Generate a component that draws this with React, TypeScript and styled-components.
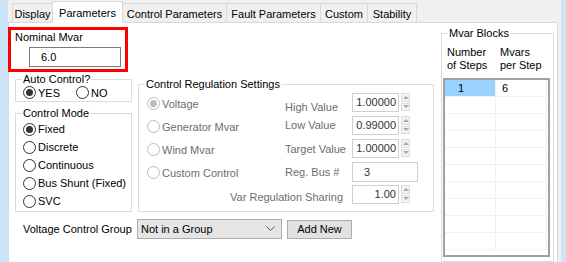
import styled, { createGlobalStyle } from "styled-components";

const GlobalStyle = createGlobalStyle`
  html, body {
    margin: 0;
    padding: 0;
  }
  body {
    font-family: "Liberation Sans", Arial, sans-serif;
    font-size: 11px;
    color: #000;
    background: #f0f0f0;
  }
`;

const Window = styled.div`
  display: flex;
  width: 566px;
  height: 262px;
  overflow: hidden;
  background: #f0f0f0;
`;

const Edge = styled.div<{ $w: number }>`
  flex: none;
  width: ${(p) => p.$w}px;
  background: #cce4f7;
`;

const Form = styled.div`
  flex: none;
  width: 553px;
  display: flex;
  flex-direction: column;
`;

const TabStrip = styled.div`
  display: flex;
  align-items: flex-end;
  height: 22px;
  padding-left: 5px;
  position: relative;
  z-index: 1;
`;

const Tab = styled.div<{ $w: number; $active?: boolean }>`
  box-sizing: border-box;
  width: ${(p) => p.$w}px;
  height: ${(p) => (p.$active ? 22 : 19)}px;
  margin-bottom: ${(p) => (p.$active ? -1 : 0)}px;
  border: 1px solid #d9d9d9;
  border-bottom: none;
  margin-left: -1px;
  background: ${(p) => (p.$active ? "#fff" : "#f0f0f0")};
  display: flex;
  align-items: center;
  justify-content: center;
  padding-top: ${(p) => (p.$active ? 0 : 1)}px;
  white-space: nowrap;
`;

const Panel = styled.div`
  box-sizing: border-box;
  width: 550px;
  flex: 1;
  display: flex;
  background: #fff;
  border: 1px solid #d9d9d9;
  border-bottom: none;
`;

const MainCol = styled.div`
  flex: none;
  width: 432px;
  display: flex;
  flex-direction: column;
`;

const HighlightBox = styled.div`
  box-sizing: border-box;
  width: 120px;
  height: 45px;
  margin: 4px 0 0 -1px;
  border: 3px solid #ff0000;
  padding: 0 0 0 4px;
`;

const FieldLabel = styled.div`
  line-height: 14px;
`;

const TextInput = styled.div<{ $w: number; $pad?: number; $enabled?: boolean }>`
  box-sizing: border-box;
  width: ${(p) => p.$w}px;
  height: 20px;
  border: 1px solid ${(p) => (p.$enabled ? "#7a7a7a" : "#d0d0d0")};
  background: #fff;
  padding-left: ${(p) => p.$pad ?? 4}px;
  line-height: 18px;
  color: ${(p) => (p.$enabled ? "#000" : "#333")};
`;

const NominalInput = styled(TextInput)`
  margin: 3px 0 0 14px;
`;

const Row = styled.div`
  display: flex;
  align-items: flex-start;
`;

const LeftCol = styled.div`
  margin-left: 6px;
  width: 117px;
  display: flex;
  flex-direction: column;
`;

const Group = styled.fieldset<{ $w: number; $top?: number; $left?: number; $bottom?: number }>`
  box-sizing: border-box;
  width: ${(p) => p.$w}px;
  margin: ${(p) => p.$top ?? 0}px 0 0 ${(p) => p.$left ?? 0}px;
  padding: 0 0 ${(p) => p.$bottom ?? 2}px 0;
  border: 1px solid #dcdcdc;
  min-width: 0;
`;

const Legend = styled.legend`
  margin-left: 6px;
  padding: 0 1px;
  line-height: 14px;
  font-size: 11px;
`;

const RadioLine = styled.div`
  display: flex;
  align-items: center;
  gap: 16px;
  height: 13px;
  padding-left: 7px;
`;

const RadioStack = styled.div`
  display: flex;
  flex-direction: column;
  padding-left: 7px;
`;

const Radio = styled.label<{ $h: number; $disabled?: boolean }>`
  display: flex;
  align-items: center;
  gap: 2px;
  height: ${(p) => p.$h}px;
  color: ${(p) => (p.$disabled ? "#6d6d6d" : "#000")};
  white-space: nowrap;
`;

const Circle = styled.span<{ $checked?: boolean; $disabled?: boolean }>`
  flex: none;
  box-sizing: border-box;
  width: 13px;
  height: 13px;
  border-radius: 50%;
  border: 1px solid ${(p) => (p.$disabled ? "#bcbcbc" : "#333")};
  background: #fff;
  display: flex;
  align-items: center;
  justify-content: center;
  &::after {
    content: "";
    display: ${(p) => (p.$checked ? "block" : "none")};
    width: 7px;
    height: 7px;
    border-radius: 50%;
    background: ${(p) => (p.$disabled ? "#bcbcbc" : "#333")};
  }
`;

const RegGrid = styled.div`
  display: grid;
  grid-template-columns: 137px 68px 66px;
  grid-auto-rows: 23px;
  padding: 1px 0 0 8px;
`;

const GridRadio = styled(Radio)<{ $row: number }>`
  grid-column: 1;
  grid-row: ${(p) => p.$row};
`;

const ValueLabel = styled.div<{ $row: number; $shift?: number }>`
  grid-column: 2;
  grid-row: ${(p) => p.$row};
  color: #6d6d6d;
  line-height: 14px;
  padding: ${(p) => p.$shift ?? 5}px 0 0 1px;
  white-space: nowrap;
`;

const SharingLabel = styled.div`
  grid-column: 1 / 3;
  grid-row: 5;
  text-align: right;
  padding: 6px 9px 0 0;
  color: #6d6d6d;
  line-height: 14px;
`;

const SpinCell = styled.div<{ $row: number }>`
  grid-column: 3;
  grid-row: ${(p) => p.$row};
  display: flex;
  align-items: flex-start;
  gap: 2px;
  padding-top: 1px;
`;

const SpinValue = styled.div`
  box-sizing: border-box;
  width: 47px;
  height: 19px;
  border: 1px solid #d0d0d0;
  text-align: right;
  padding-right: 2px;
  line-height: 17px;
  color: #333;
`;

const Spinner = styled.div`
  display: flex;
  flex-direction: column;
  gap: 1px;
  width: 9px;
  height: 18px;
`;

const SpinButton = styled.span<{ $down?: boolean }>`
  flex: 1;
  box-sizing: border-box;
  border: 1px solid #dcdcdc;
  background: #f4f4f4;
  display: flex;
  align-items: center;
  justify-content: center;
  &::after {
    content: "";
    border-left: 3px solid transparent;
    border-right: 3px solid transparent;
    ${(p) => (p.$down ? "border-top" : "border-bottom")}: 3px solid #a8a8a8;
  }
`;

const BusCell = styled.div`
  grid-column: 3;
  grid-row: 4;
  padding-top: 1px;
`;

const BottomRow = styled.div`
  display: flex;
  align-items: center;
  margin-top: 7px;
  height: 20px;
`;

const BottomLabel = styled.div`
  width: 114px;
  margin-left: 14px;
  white-space: nowrap;
`;

const Select = styled.div`
  box-sizing: border-box;
  width: 145px;
  height: 20px;
  border: 1px solid #adadad;
  background: #e5e5e5;
  display: flex;
  align-items: center;
  justify-content: space-between;
  padding: 0 6px 0 3px;
`;

const Button = styled.div`
  box-sizing: border-box;
  width: 65px;
  height: 19px;
  margin-left: 5px;
  border: 1px solid #adadad;
  background: #e1e1e1;
  display: flex;
  align-items: center;
  justify-content: center;
`;

const BlocksHeader = styled.div`
  display: grid;
  grid-template-columns: 53px 53px;
  padding: 6px 0 0 5px;
`;

const HeaderLine = styled.div`
  height: 13px;
  line-height: 13px;
  white-space: nowrap;
`;

const Table = styled.div`
  box-sizing: border-box;
  width: 107px;
  height: 179px;
  margin: 6px 0 0 1px;
  border: 2px solid #a0a0a0;
  display: grid;
  grid-template-columns: 51px 51px;
  grid-auto-rows: 17px;
  align-content: start;
`;

const Cell = styled.div<{ $selected?: boolean; $pad: number }>`
  border-right: 1px solid #f0f0f0;
  border-bottom: 1px solid #f0f0f0;
  background: ${(p) => (p.$selected ? "#99d1ff" : "#fff")};
  padding-left: ${(p) => p.$pad}px;
  line-height: 16px;
`;

const Chevron = () => (
  <svg width="9" height="6" viewBox="0 0 9 6">
    <path d="M0.5 0.5 L4.5 4.5 L8.5 0.5" fill="none" stroke="#555" strokeWidth="1" />
  </svg>
);

const tabs = [
  { label: "Display", w: 41 },
  { label: "Parameters", w: 71, active: true },
  { label: "Control Parameters", w: 105 },
  { label: "Fault Parameters", w: 95 },
  { label: "Custom", w: 48 },
  { label: "Stability", w: 50 },
];

const modes = ["Fixed", "Discrete", "Continuous", "Bus Shunt (Fixed)", "SVC"];
const regModes = ["Voltage", "Generator Mvar", "Wind Mvar", "Custom Control"];
const spins = [
  { label: "High Value", value: "1.00000", row: 1, shift: 8 },
  { label: "Low Value", value: "0.99000", row: 2, shift: 3 },
  { label: "Target Value", value: "1.00000", row: 3, shift: 4 },
];

export default function App() {
  const rows = Array.from({ length: 10 }, (_, i) => i);
  return (
    <>
      <GlobalStyle />
      <Window>
        <Edge $w={8} />
        <Form>
          <TabStrip>
            {tabs.map((t) => (
              <Tab key={t.label} $w={t.w} $active={t.active}>
                {t.label}
              </Tab>
            ))}
          </TabStrip>
          <Panel>
            <MainCol>
              <HighlightBox>
                <FieldLabel>Nominal Mvar</FieldLabel>
                <NominalInput $w={92} $pad={11} $enabled>
                  6.0
                </NominalInput>
              </HighlightBox>
              <Row>
                <LeftCol>
                  <Group $w={117} $bottom={2}>
                    <Legend>Auto Control?</Legend>
                    <RadioLine>
                      <Radio $h={13}>
                        <Circle $checked />
                        YES
                      </Radio>
                      <Radio $h={13}>
                        <Circle />
                        NO
                      </Radio>
                    </RadioLine>
                  </Group>
                  <Group $w={117} $top={4} $bottom={1}>
                    <Legend>Control Mode</Legend>
                    <RadioStack>
                      {modes.map((m, i) => (
                        <Radio key={m} $h={18}>
                          <Circle $checked={i === 0} />
                          {m}
                        </Radio>
                      ))}
                    </RadioStack>
                  </Group>
                </LeftCol>
                <Group $w={296} $top={5} $left={6} $bottom={4}>
                  <Legend>Control Regulation Settings</Legend>
                  <RegGrid>
                    {regModes.map((m, i) => (
                      <GridRadio key={m} $h={23} $row={i + 1} $disabled>
                        <Circle $disabled $checked={i === 0} />
                        {m}
                      </GridRadio>
                    ))}
                    {spins.map((s) => (
                      <ValueLabel key={s.label} $row={s.row} $shift={s.shift}>
                        {s.label}
                      </ValueLabel>
                    ))}
                    {spins.map((s) => (
                      <SpinCell key={s.label} $row={s.row}>
                        <SpinValue>{s.value}</SpinValue>
                        <Spinner>
                          <SpinButton />
                          <SpinButton $down />
                        </Spinner>
                      </SpinCell>
                    ))}
                    <ValueLabel $row={4} $shift={4}>
                      Reg. Bus #
                    </ValueLabel>
                    <BusCell>
                      <TextInput $w={66} $pad={11}>
                        3
                      </TextInput>
                    </BusCell>
                    <SharingLabel>Var Regulation Sharing</SharingLabel>
                    <SpinCell $row={5}>
                      <SpinValue>1.00</SpinValue>
                      <Spinner>
                        <SpinButton />
                        <SpinButton $down />
                      </Spinner>
                    </SpinCell>
                  </RegGrid>
                </Group>
              </Row>
              <BottomRow>
                <BottomLabel>Voltage Control Group</BottomLabel>
                <Select>
                  <span>Not in a Group</span>
                  <Chevron />
                </Select>
                <Button>Add New</Button>
              </BottomRow>
            </MainCol>
            <Group $w={113} $top={3} $bottom={1}>
              <Legend>Mvar Blocks</Legend>
              <BlocksHeader>
                <div>
                  <HeaderLine>Number</HeaderLine>
                  <HeaderLine>of Steps</HeaderLine>
                </div>
                <div>
                  <HeaderLine>Mvars</HeaderLine>
                  <HeaderLine>per Step</HeaderLine>
                </div>
              </BlocksHeader>
              <Table>
                {rows.flatMap((r) => [
                  <Cell key={`a${r}`} $pad={13} $selected={r === 0}>
                    {r === 0 ? "1" : ""}
                  </Cell>,
                  <Cell key={`b${r}`} $pad={6}>
                    {r === 0 ? "6" : ""}
                  </Cell>,
                ])}
              </Table>
            </Group>
          </Panel>
        </Form>
        <Edge $w={5} />
      </Window>
    </>
  );
}
